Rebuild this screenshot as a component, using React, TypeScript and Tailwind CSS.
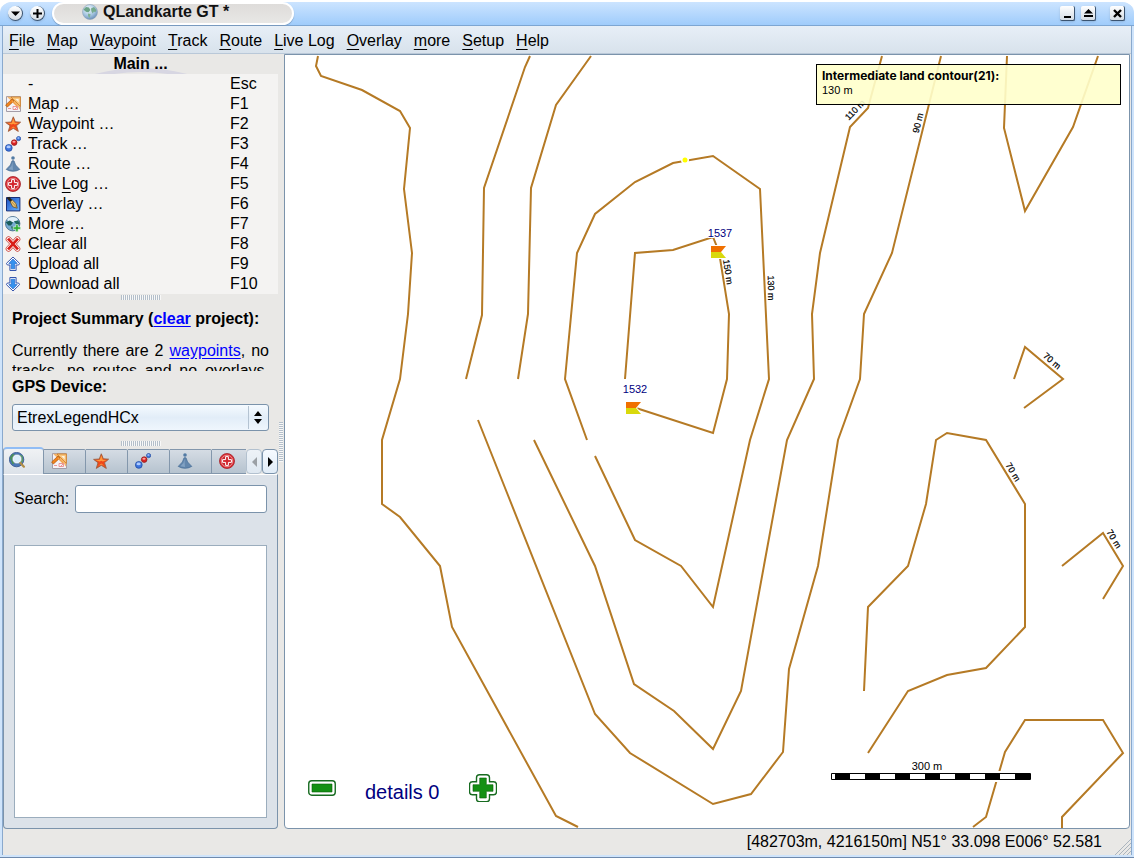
import React from 'react';

type IconProps = { className?: string };

function GlobeIcon({ className = 'w-4 h-4' }: IconProps) {
  return (
    <svg viewBox="0 0 16 16" className={className} aria-hidden="true">
      <defs>
        <radialGradient id="globeSea" cx="40%" cy="30%" r="70%">
          <stop offset="0%" stopColor="#f2f8fd" />
          <stop offset="60%" stopColor="#a9c8e2" />
          <stop offset="100%" stopColor="#6d93bb" />
        </radialGradient>
      </defs>
      <circle cx="8" cy="8" r="7.5" fill="url(#globeSea)" stroke="#8ea3b7" strokeWidth="0.6" />
      <path d="M1.5 5.5 4 3l3 .6L8.4 6 6.5 8.2 4.5 8 3 7Z" fill="#6ba387" />
      <path d="m9 4.4 3-1.4 2.4 3-1 2.2-1.6-.6-1 2-1.4-2.4Z" fill="#76aa8c" />
      <path d="m6 9.6 2.6.6L7.6 14 6 12Z" fill="#80b295" />
    </svg>
  );
}

function MapIcon({ className = 'w-4 h-4' }: IconProps) {
  return (
    <svg viewBox="0 0 16 16" className={className} aria-hidden="true">
      <path d="M1.5.5h14v15h-14Z" fill="#f4f2f7" stroke="#a39da8" />
      <path d="M2 .8h13.2v13Z" fill="#f4b469" />
      <path d="M6 1h9.4v9.4Z" fill="#f9c67e" stroke="#d07d26" strokeWidth="0.8" />
      <path d="M10.4 3h3.2v3.2Z" fill="#fdf4e4" />
      <path d="M2 9.5 7 5l6.5 6v4H2Z" fill="#f4f2f7" />
      <path d="M8 10.5h4.5v3H8ZM9.5 13.5l3-3M3 12.5h3" fill="none" stroke="#e88080" strokeWidth="0.8" />
      <path d="M.6 9 7 3l2 1.9L2.4 11Z" fill="#f2831c" stroke="#a9540f" strokeWidth="0.7" />
      <path d="m7 5 5 5" stroke="#f2a24a" strokeWidth="1.2" />
    </svg>
  );
}

function StarIcon({ className = 'w-4 h-4' }: IconProps) {
  return (
    <svg viewBox="0 0 16 16" className={className} aria-hidden="true">
      <path d="m8.3.8 2 5 5.3.4-4.1 3.5 1.8 5.7-5-3.1-5 3.1 1.7-5.7L.6 6.4 6.3 6Z" fill="#f0481a" stroke="#9c6140" strokeWidth="0.9" strokeLinejoin="round" />
      <path d="M8.3 2.6 9.8 6.8l3.9.2-3.9 1.5-1.5-.8-1.5.8L2.6 7.2l4.2-.4Z" fill="#ff9a3c" />
      <path d="m5.2 12.8 3.1-2.4 3 2.3-3-1Z" fill="#ff8b37" />
    </svg>
  );
}

function TrackIcon({ className = 'w-4 h-4' }: IconProps) {
  return (
    <svg viewBox="0 0 16 16" className={className} aria-hidden="true">
      <circle cx="3.8" cy="11.9" r="3.4" fill="#3d74dd" stroke="#1d469c" strokeWidth="0.7" />
      <ellipse cx="3.6" cy="10.9" rx="2.1" ry="1.4" fill="#aecbff" />
      <circle cx="9.2" cy="6.6" r="2.8" fill="#dc2222" stroke="#811515" strokeWidth="0.7" />
      <ellipse cx="9" cy="5.7" rx="1.6" ry="1" fill="#ff9f9f" />
      <circle cx="13.6" cy="2.6" r="2.1" fill="#3d74dd" stroke="#1d469c" strokeWidth="0.7" />
      <ellipse cx="13.4" cy="2" rx="1.2" ry="0.8" fill="#aecbff" />
    </svg>
  );
}

function RouteIcon({ className = 'w-4 h-4' }: IconProps) {
  return (
    <svg viewBox="0 0 16 16" className={className} aria-hidden="true">
      <circle cx="8" cy="2" r="1.8" fill="#537ba4" />
      <path d="M7 4.8h2l1.6 4.2 4.2 4.4q-6.8 3.8-13.6 0L5.4 9Z" fill="#6387ad" stroke="#466d97" strokeWidth="0.7" />
      <path d="M7.4 6 6.5 10l-3 3.2 4.5.8Z" fill="#82a2c3" />
    </svg>
  );
}

function LiveLogIcon({ className = 'w-4 h-4' }: IconProps) {
  return (
    <svg viewBox="0 0 16 16" className={className} aria-hidden="true">
      <circle cx="8" cy="8" r="7.5" fill="#de2f35" stroke="#a11f26" strokeWidth="0.8" />
      <circle cx="8" cy="8" r="5.7" fill="#c8252c" stroke="#f3b6b8" strokeWidth="0.7" />
      <path d="M6.6 3.6h2.8v3h3v2.8h-3v3H6.6v-3h-3V6.6h3Z" fill="#d3232b" stroke="#fff" strokeWidth="1" />
    </svg>
  );
}

function OverlayIcon({ className = 'w-4 h-4' }: IconProps) {
  return (
    <svg viewBox="0 0 16 16" className={className} aria-hidden="true">
      <defs>
        <linearGradient id="overlayBlue" x1="0" y1="0" x2="1" y2="1">
          <stop offset="0%" stopColor="#1b50c4" />
          <stop offset="100%" stopColor="#69b5ff" />
        </linearGradient>
      </defs>
      <path d="M1.5 1.5h13.4v13.4H1.5Z" fill="url(#overlayBlue)" stroke="#172f78" />
      <path d="m1.6 2 2.6-1.2 3.2 3.4-1.8 2Z" fill="#262218" />
      <path d="m5.2 6 2.2-2L11 7.6l1.2 4.6-4.4-1.4Z" fill="#f0c873" stroke="#54421e" strokeWidth="0.7" />
      <path d="m6.8 6 4.6 5" stroke="#7a5b24" strokeWidth="0.6" />
    </svg>
  );
}

function MoreIcon({ className = 'w-4 h-4' }: IconProps) {
  return (
    <svg viewBox="0 0 16 16" className={className} aria-hidden="true">
      <circle cx="7.7" cy="7.7" r="7.2" fill="#76abd2" stroke="#3c6181" strokeWidth="0.8" />
      <ellipse cx="7.6" cy="3.6" rx="5.2" ry="2.7" fill="#e1f0fa" />
      <path d="m.8 6.2 4-1.6 3.2 2L6 9.4l-2.6.1Z" fill="#195c5b" />
      <path d="m8.8 5.3 4.2-.7 2 3-2.6 1.8Z" fill="#226a60" />
      <path d="m5.8 10.2 2.4.6-.8 3.7Z" fill="#2b7367" />
      <path d="M10.7 8.6h2.4v2.3h2.5v2.4h-2.5v2.4h-2.4v-2.4H8.2v-2.4h2.5Z" fill="#2fae35" stroke="#e6f8e6" strokeWidth="0.6" />
    </svg>
  );
}

function ClearIcon({ className = 'w-4 h-4' }: IconProps) {
  return (
    <svg viewBox="0 0 16 16" className={className} aria-hidden="true">
      <path d="m3.5 3.2 9 9.6m0-9.6-9 9.6" stroke="#c93a33" strokeWidth="5.6" strokeLinecap="round" />
      <path d="m3.5 3.2 9 9.6m0-9.6-9 9.6" stroke="#fff" strokeWidth="4.2" strokeLinecap="round" />
      <path d="m3 2.6 10 10.8m0-10.8L3 13.4" stroke="#d81e17" strokeWidth="2.8" />
    </svg>
  );
}

function ArrowIcon({ className = 'w-4 h-4' }: IconProps) {
  return (
    <svg viewBox="0 0 16 16" className={className} aria-hidden="true">
      <path d="m8 1 6.6 6.4-1 1.6h-2.5v5.5H4.9V9H2.4l-1-1.6Z" fill="#fff" stroke="#3554ad" strokeWidth="1" strokeLinejoin="round" />
      <path d="m8 3 4.2 4.4H9.8v5.4H6.2V7.4H3.8Z" fill="#3592ee" stroke="#2368cd" strokeWidth="0.7" />
    </svg>
  );
}

function SearchIcon({ className = 'w-4 h-4' }: IconProps) {
  return (
    <svg viewBox="0 0 16 16" className={className} aria-hidden="true">
      <circle cx="7.6" cy="7.6" r="7.2" fill="#4c78b7" stroke="#2f518c" strokeWidth="0.8" />
      <path d="m.8 5.4 3-3.6L6 3 4.4 7l1 4-1.8 1.6Z" fill="#4b9159" />
      <path d="m10.5 2.4 3 1.6.6 5-2 2Z" fill="#5c9f5a" />
      <circle cx="8" cy="7" r="4" fill="#dceefb" stroke="#f7fbff" strokeWidth="1.2" />
      <circle cx="8" cy="7" r="4.6" fill="none" stroke="#7b91a8" strokeWidth="0.5" />
      <path d="m11.5 10.9 3.4 3.8" stroke="#b18c46" strokeWidth="2.2" strokeLinecap="round" />
    </svg>
  );
}

// A label whose shortcut letter is underlined
function Mnemonic({ text, at }: { text: string; at: number }) {
  if (at < 0) return <>{text}</>;
  return (
    <>
      {text.slice(0, at)}
      <span className="underline decoration-1 underline-offset-[3px] [text-decoration-skip-ink:none]">{text[at]}</span>
      {text.slice(at + 1)}
    </>
  );
}

const menus = ['File', 'Map', 'Waypoint', 'Track', 'Route', 'Live Log', 'Overlay', 'more', 'Setup', 'Help'];

const actions = [
  { label: '-', at: -1, hotkey: 'Esc', icon: null },
  { label: 'Map …', at: 0, hotkey: 'F1', icon: <MapIcon /> },
  { label: 'Waypoint …', at: 0, hotkey: 'F2', icon: <StarIcon /> },
  { label: 'Track …', at: 0, hotkey: 'F3', icon: <TrackIcon /> },
  { label: 'Route …', at: 0, hotkey: 'F4', icon: <RouteIcon /> },
  { label: 'Live Log …', at: 5, hotkey: 'F5', icon: <LiveLogIcon /> },
  { label: 'Overlay …', at: 0, hotkey: 'F6', icon: <OverlayIcon /> },
  { label: 'More …', at: 3, hotkey: 'F7', icon: <MoreIcon /> },
  { label: 'Clear all', at: 0, hotkey: 'F8', icon: <ClearIcon /> },
  { label: 'Upload all', at: 1, hotkey: 'F9', icon: <ArrowIcon /> },
  { label: 'Download all', at: 4, hotkey: 'F10', icon: <ArrowIcon className="w-4 h-4 rotate-180" /> },
];

const tabs = [
  { name: 'Map', icon: <MapIcon /> },
  { name: 'Waypoints', icon: <StarIcon /> },
  { name: 'Tracks', icon: <TrackIcon /> },
  { name: 'Routes', icon: <RouteIcon /> },
];

const contours = [
  '318,56 316,66 321,76 362,90 400,111 410,128 404,189 412,253 408,314 400,379 382,440 382,504 400,517 440,566 452,627 556,816 578,827',
  '530,56 525,67 484,188 482,315 466,379',
  '591,56 556,105 531,188 528,314 518,379',
  '478,420 595,714 630,753 713,804 751,794 783,752 789,669 818,566 838,440 860,379 864,314 892,253 941,56',
  '534,440 595,566 634,684 674,711 713,749 741,691 787,440 814,379 812,314 820,253 850,127 868,108 882,56',
  '587,440 565,379 577,253 595,214 635,182 673,163 713,156 760,189 769,379 750,440 713,607 681,566 635,540 595,456',
  '625,379 635,253 673,250 713,237 719,252 729,314 727,379 713,433 633,407',
  '1007,56 1004,128 1025,211 1073,127 1098,56',
  '1014,379 1025,347 1063,379 1024,408',
  '864,691 868,607 908,566 926,504 936,440 947,433 986,440 1025,504 1025,627 986,668 947,675 908,691 868,753',
  '1062,566 1103,533 1123,566 1103,599',
  '973,827 986,817 1005,752 1025,720 1103,720 1123,753 1062,817 1062,828',
];

const heights = [
  { text: '110 m', x: 855, y: 110, angle: -46 },
  { text: '90 m', x: 918, y: 123, angle: -76 },
  { text: '150 m', x: 728, y: 272, angle: 81 },
  { text: '130 m', x: 771, y: 288, angle: 89 },
  { text: '70 m', x: 1052, y: 361, angle: 40 },
  { text: '70 m', x: 1013, y: 472, angle: 59 },
  { text: '70 m', x: 1114, y: 539, angle: 58 },
];

const waypoints = [
  { name: '1537', x: 718, y: 252 },
  { name: '1532', x: 633, y: 408 },
];

function MapCanvas() {
  return (
    <svg className="absolute inset-0 w-full h-full" role="img" aria-label="Contour map">
      <g transform="translate(-285 -55)" fontFamily="'Liberation Sans', Arial, sans-serif">
        {contours.map((points, i) => (
          <polyline key={i} points={points} fill="none" stroke="#b57a25" strokeWidth="2" />
        ))}
        <circle cx="685" cy="160" r="4" fill="#fff" />
        <circle cx="685" cy="160" r="2.5" fill="#ff0" />
        {heights.map((h, i) => (
          <text key={i} transform={`translate(${h.x} ${h.y}) rotate(${h.angle})`} y="3" textAnchor="middle" fontSize="9" stroke="#000" strokeWidth="0.2">
            {h.text}
          </text>
        ))}
        {waypoints.map(w => (
          <g key={w.name} transform={`translate(${w.x} ${w.y})`}>
            <path d="M-8-7H11L4 0l7 7H-8Z" fill="#fff" />
            <path d="M-7-6H8L3 0H-7Z" fill="#f07000" />
            <path d="M-7 0H3L8 6H-7Z" fill="#d9d90c" />
            <text x="2" y="-15" textAnchor="middle" fontSize="11" fill="#000080" stroke="#fff" strokeWidth="2" paintOrder="stroke">{w.name}</text>
          </g>
        ))}
        {/* Scale bar */}
        <path d="M829 771H1033V782H829Z" fill="#fff" />
        <text x="927" y="770" textAnchor="middle" fontSize="11">300 m</text>
        <path d="M831.5 773.5H1030.5V779.5H831.5Z" fill="#fff" stroke="#000" />
        {[835, 865, 895, 925, 955, 985, 1015].map(x => (
          <path key={x} d={`M${x} 773h15v7h-15Z`} />
        ))}
      </g>
    </svg>
  );
}

function Grip() {
  return (
    <div className="h-[5px] w-10 mx-auto bg-[repeating-linear-gradient(90deg,#b4bfca_0_1px,#f8f8f8_1px_2px)]" />
  );
}

function TitleButton({ label, round, children }: { label: string; round?: boolean; children: React.ReactNode }) {
  return (
    <button
      aria-label={label}
      className={`w-[15px] h-[15px] flex items-center justify-center border-r border-b border-[#3b5470] bg-gradient-to-b from-white to-[#d5dde5] shadow-sm ${round ? 'rounded-full' : 'rounded-xs'}`}
    >
      <svg viewBox="0 0 11 11" className="w-[11px] h-[11px]">{children}</svg>
    </button>
  );
}

export default function App() {
  return (
    <div className="min-h-screen flex flex-col bg-[#cfe4fb] rounded-t-xl border-t-2 border-t-white border-b border-b-[#6f8aad] font-['Liberation_Sans',Arial,sans-serif] text-base leading-5 text-black">
      {/* Title bar */}
      <header className="h-6 shrink-0 flex items-start justify-between rounded-t-xl bg-gradient-to-b from-[#cce4ff] to-[#9fccfb] border-b border-[#7da6d2] pl-2 pr-2">
        <div className="flex items-start">
          <div className="flex gap-[7px] pt-1">
            <TitleButton label="Window menu" round><path d="M1 3.5h9L5.5 8Z" /></TitleButton>
            <TitleButton label="On all desktops" round><path d="M4.5 1h2v3.5H10v2H6.5V10h-2V6.5H1v-2h3.5Z" /></TitleButton>
          </div>
          <h1 className="ml-[7px] w-[242px] h-[23px] flex items-center gap-[5px] pl-7 pb-1 rounded-full border-2 border-white bg-gradient-to-b from-[#dedcda] to-[#e8e7e5] font-bold text-[#111] shadow-[0_1px_1px_#7899bd]">
            <GlobeIcon />
            QLandkarte GT *
          </h1>
        </div>
        <div className="flex gap-[6px] pt-1 pr-[1px]">
          <TitleButton label="Minimize"><path d="M2 8h7v2H2Z" /></TitleButton>
          <TitleButton label="Maximize"><path d="m5.5 1 4.5 4.5H1ZM1 7h9v2H1Z" /></TitleButton>
          <div className="pl-2">
            <TitleButton label="Close"><path d="m2 2 7 7m0-7-7 7" stroke="#000" strokeWidth="2.4" /></TitleButton>
          </div>
        </div>
      </header>

      <div className="flex-1 flex flex-col mx-[2px] mb-[2px] border-x border-[#8aa9cd] bg-[#e9e8e6]">
        <nav className="h-7 flex items-center gap-3 px-[6px] pt-[2px] bg-gradient-to-b from-[#e7eff7] to-[#d8e2ec] border-b border-[#b9c8d8]">
          {menus.map(m => (
            <button key={m}><Mnemonic text={m} at={0} /></button>
          ))}
        </nav>

        <div className="flex-1 flex">
          {/* Side bar */}
          <aside className="w-[275px] shrink-0 flex flex-col">
            <div className="relative h-5 overflow-hidden text-center font-bold">
              <div className="absolute left-1/2 top-[14px] size-[360px] -translate-x-1/2 rounded-full border-4 border-[#d7d6e2]" />
              <h2 className="relative leading-[19px]">Main ...</h2>
            </div>
            <ul className="bg-[#f4f3f2]">
              {actions.map(a => (
                <li key={a.hotkey}>
                  <button className="w-full h-5 flex items-center text-left">
                    <span className="w-[25px] pl-[2px]">{a.icon}</span>
                    <span className="flex-1"><Mnemonic text={a.label} at={a.at} /></span>
                    <span className="w-12">{a.hotkey}</span>
                  </button>
                </li>
              ))}
            </ul>
            <div className="pt-[1px]"><Grip /></div>

            <section className="px-[9px]">
              <h3 className="pt-[9px] font-bold">
                Project Summary (<a href="#clear" className="text-[#00f] underline underline-offset-2">clear</a> project):
              </h3>
              <p className="mt-3 h-[30px] overflow-hidden text-justify [text-align-last:justify]">
                Currently there are 2 <a href="#waypoints" className="text-[#00f] underline underline-offset-2">waypoints</a>, no tracks, no routes and no overlays.
              </p>
              <label htmlFor="device" className="block mt-[6px] font-bold">GPS Device:</label>
              <div className="relative mt-[7px]">
                <select id="device" className="w-full h-[27px] appearance-none pl-1 rounded-[3px] border border-[#7b93ab] bg-gradient-to-b from-[#f5faff] via-[#e2edf8] to-[#eff6fd]">
                  <option>EtrexLegendHCx</option>
                </select>
                <svg viewBox="0 0 24 23" className="absolute right-0 top-[2px] w-6 h-[23px] pointer-events-none" aria-hidden="true">
                  <path d="M3.5 0v23" stroke="#b4c3d2" />
                  <path d="M9 10h8l-4-5ZM9 13h8l-4 5Z" />
                </svg>
              </div>
            </section>

            <div className="pt-[10px] pb-[1px]"><Grip /></div>

            {/* Tool tabs */}
            <div className="flex items-end h-[27px] overflow-hidden" role="tablist">
              <button role="tab" aria-selected="true" aria-label="Search" className="w-[41px] h-[27px] shrink-0 flex items-center pl-[5px] pb-1 rounded-t-sm border border-b-0 border-t-2 border-[#8397ac] border-t-[#91bdf5] bg-gradient-to-b from-[#f0f2f4] to-[#dce2e9]">
                <SearchIcon />
              </button>
              {tabs.map(t => (
                <button key={t.name} role="tab" aria-selected="false" aria-label={t.name} className="w-[42px] h-[25px] shrink-0 flex items-center pl-[7px] pb-[2px] border-t border-r border-b border-[#8397ac] rounded-tr-xs bg-gradient-to-b from-[#d5dce4] to-[#b6c3cf]">
                  {t.icon}
                </button>
              ))}
              <button role="tab" aria-selected="false" aria-label="Live Log" className="flex-1 h-[25px] flex items-center pl-[7px] pb-[2px] border-t border-b border-[#8397ac] bg-gradient-to-b from-[#d5dce4] to-[#b6c3cf]">
                <LiveLogIcon className="w-4 h-4 shrink-0" />
              </button>
              <button aria-label="Scroll tabs left" className="w-4 h-[25px] shrink-0 flex items-center justify-center border border-[#b3c1cf] rounded-sm bg-gradient-to-b from-[#edf2f7] to-[#dfe8f1]">
                <svg viewBox="0 0 5 10" className="w-[5px] h-[10px]"><path d="M5 0v10L0 5Z" fill="#9ba0a5" /></svg>
              </button>
              <button aria-label="Scroll tabs right" className="w-4 h-[25px] shrink-0 flex items-center justify-center border border-[#7b93ab] rounded-sm bg-gradient-to-b from-[#f6faff] to-[#e1ecf7]">
                <svg viewBox="0 0 5 10" className="w-[5px] h-[10px]"><path d="M0 0v10l5-5Z" /></svg>
              </button>
            </div>

            <div className="flex-1 flex flex-col px-[10px] pt-[10px] pb-[10px] rounded-b-sm border border-[#7b93ab] border-t-white bg-[#dce2e9]">
              <div className="flex items-center gap-[6px]">
                <label htmlFor="search">Search:</label>
                <input id="search" type="text" className="flex-1 min-w-0 h-7 px-1 rounded-[3px] border border-[#7b93ab] bg-white" />
              </div>
              <ul aria-label="Search results" className="flex-1 mt-8 border border-[#9badbd] bg-white" />
            </div>
          </aside>

          <div className="w-[6px] shrink-0 flex items-center">
            <div className="w-1 h-10 mx-auto bg-[repeating-linear-gradient(180deg,#b4bfca_0_1px,#f8f8f8_1px_2px)]" />
          </div>

          {/* Map view */}
          <main className="relative flex-1 min-w-0 mr-[1px] overflow-hidden rounded-b-sm border border-[#7b93ab] bg-white">
            <MapCanvas />
            <div className="absolute top-[9px] right-2 w-[305px] h-[41px] px-[5px] py-1 border border-black bg-[#ffffcb]/90 text-[11px] leading-[14px]">
              <p className="font-['Inter',sans-serif] text-xs leading-[14px] font-bold">Intermediate land contour(21):</p>
              <p>130 m</p>
            </div>
            <div className="absolute left-[23px] bottom-[22px] flex items-center gap-[29px] text-xl text-[#000080]">
              <button aria-label="Less details">
                <svg viewBox="0 0 28 28" className="w-7 h-7">
                  <rect x="0.75" y="6.75" width="26.5" height="14.5" rx="3" fill="#fff" stroke="#176b20" strokeWidth="1.4" />
                  <path d="M4 10h20v8H4Z" fill="#149014" stroke="#086008" strokeWidth="0.6" />
                </svg>
              </button>
              <output className="pt-2">details 0</output>
              <button aria-label="More details">
                <svg viewBox="0 0 28 28" className="w-7 h-7">
                  <path d="M10.5.7h7q3 0 3 3v4h4q3 0 3 3v7q0 3-3 3h-4v4q0 3-3 3h-7q-3 0-3-3v-4h-4q-3 0-3-3v-7q0-3 3-3h4v-4q0-3 3-3Z" fill="#fff" stroke="#176b20" strokeWidth="1.4" />
                  <path d="M10.7 4h6.6v6.7H24v6.6h-6.7V24h-6.6v-6.7H4v-6.6h6.7Z" fill="#149014" stroke="#086008" strokeWidth="0.6" />
                </svg>
              </button>
            </div>
          </main>
        </div>

        <footer className="h-[26px] flex items-center justify-end">
          <span className="pr-[13px]">[482703m, 4216150m] N51° 33.098 E006° 52.581</span>
          <svg viewBox="0 0 16 16" className="w-4 h-4 self-end" aria-hidden="true">
            <path d="M0 16 16 0M4 16 16 4M8 16l8-8M12 16l4-4" stroke="#aab4be" />
          </svg>
        </footer>
      </div>
    </div>
  );
}
